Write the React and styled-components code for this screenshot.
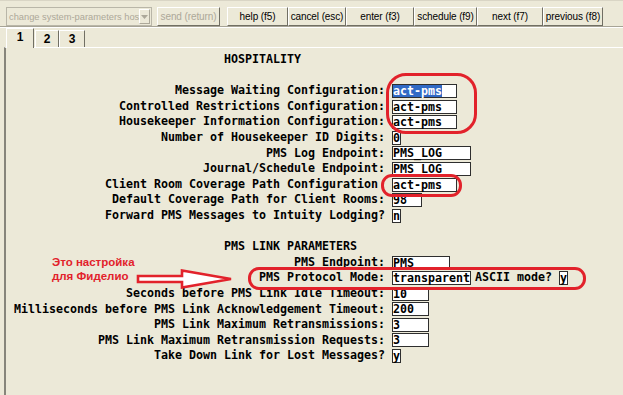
import React from 'react'
import styled, { createGlobalStyle } from 'styled-components'

const RED = '#e2222b'
const CELL = 7

const buttons = [
  { label: 'help (f5)', w: 61 },
  { label: 'cancel (esc)', w: 58 },
  { label: 'enter (f3)', w: 68 },
  { label: 'schedule (f9)', w: 63 },
  { label: 'next (f7)', w: 66 },
  { label: 'previous (f8)', w: 60 },
]

const rows = [
  { heading: 'HOSPITALITY' },
  {},
  { label: 'Message Waiting Configuration:', value: 'act-pms', size: 9, selected: true },
  { label: 'Controlled Restrictions Configuration:', value: 'act-pms', size: 9 },
  { label: 'Housekeeper Information Configuration:', value: 'act-pms', size: 9 },
  { label: 'Number of Housekeeper ID Digits:', value: '0', size: 1 },
  { label: 'PMS Log Endpoint:', value: 'PMS_LOG', size: 11 },
  { label: 'Journal/Schedule Endpoint:', value: 'PMS_LOG', size: 11 },
  { label: 'Client Room Coverage Path Configuration\u00a0', value: 'act-pms', size: 9 },
  { label: 'Default Coverage Path for Client Rooms:', value: '98', size: 4 },
  { label: 'Forward PMS Messages to Intuity Lodging?', value: 'n', size: 1 },
  {},
  { heading: 'PMS LINK PARAMETERS' },
  { label: 'PMS Endpoint:', value: 'PMS', size: 8 },
  { label: 'PMS Protocol Mode:', value: 'transparent', size: 11, extra: { label: 'ASCII mode?', value: 'y', size: 1 } },
  { label: 'Seconds before PMS Link Idle Timeout:', value: '10', size: 5 },
  { label: 'Milliseconds before PMS Link Acknowledgement Timeout:', value: '200', size: 5 },
  { label: 'PMS Link Maximum Retransmissions:', value: '3', size: 5 },
  { label: 'PMS Link Maximum Retransmission Requests:', value: '3', size: 5 },
  { label: 'Take Down Link for Lost Messages?', value: 'y', size: 1 },
]

export default function App() {
  return (
    <>
      <Global />
      <Root>
        <Toolbar>
          <Combo>
            <ComboText>change system-parameters hos</ComboText>
            <ComboArrow>
              <svg width="7" height="4" viewBox="0 0 7 4"><path d="M0 0h7L3.5 4z" fill="#aca899" /></svg>
            </ComboArrow>
          </Combo>
          <ToolButton $w={63} $disabled>send (return)</ToolButton>
          <ButtonGroup>
            {buttons.map(b => <ToolButton key={b.label} $w={b.w}>{b.label}</ToolButton>)}
          </ButtonGroup>
        </Toolbar>
        <Tabs>
          <Tab $active $w={28}>1</Tab>
          <Tab $w={24}>2</Tab>
          <Tab $w={26}>3</Tab>
        </Tabs>
        <Panel>
          {rows.map((r, i) => (
            <Row key={i}>
              {r.heading && <Heading>{r.heading}</Heading>}
              {r.label && <Label>{r.label}</Label>}
              {r.value && (
                <Field $size={r.size}>
                  {r.selected ? <Selected>{r.value}</Selected> : r.value}
                </Field>
              )}
              {r.extra && (
                <>
                  <ExtraLabel>{r.extra.label}</ExtraLabel>
                  <Field $size={r.extra.size}>{r.extra.value}</Field>
                </>
              )}
            </Row>
          ))}
        </Panel>

        <Oval $x={386} $y={73} $w={91} $h={61} $r={20} />
        <Oval $x={381} $y={174} $w={81} $h={23} $r={11} />
        <Oval $x={248} $y={267} $w={338} $h={23} $r={11} />
        <Note>Это настройка<br />для Фиделио</Note>
        <Arrow width="98" height="20" viewBox="0 0 98 20">
          <polygon points="2,7 46,7 46,1.5 95,10 46,18.5 46,13 2,13" fill="#fff" stroke={RED} strokeWidth="2.6" strokeLinejoin="miter" />
        </Arrow>
      </Root>
    </>
  )
}

const Global = createGlobalStyle`
  html, body {
    margin: 0;
    padding: 0;
    background: #ece9d8;
  }
`
const Root = styled.div`
  position: relative;
  width: 623px;
  height: 395px;
  overflow: hidden;
  background: #ece9d8;
  display: flex;
  flex-direction: column;
`
const Toolbar = styled.div`
  box-sizing: border-box;
  height: 28px;
  padding: 6px 0 0 6px;
  display: flex;
  align-items: flex-start;
  border-top: 1px solid #d9d5c5;
  border-bottom: 1px solid #fff;
  box-shadow: inset 0 -1px #a7a496;
`
const Combo = styled.div`
  box-sizing: border-box;
  width: 146px;
  height: 19px;
  display: flex;
  align-items: center;
  border: 1px solid #b9b6a8;
  background: #ece9d8;
`
const ComboText = styled.div`
  flex: 1;
  overflow: hidden;
  white-space: nowrap;
  padding-left: 2px;
  font: 9.3px 'Liberation Sans', Arial, sans-serif;
  color: #aca899;
`
const ComboArrow = styled.div`
  box-sizing: border-box;
  width: 11px;
  height: 15px;
  margin-right: 1px;
  display: flex;
  align-items: center;
  justify-content: center;
  border: 1px solid;
  border-color: #fff #aca899 #aca899 #fff;
`
const ButtonGroup = styled.div`
  display: flex;
  margin-left: 7px;
`
const ToolButton = styled.div`
  box-sizing: border-box;
  width: ${p => p.$w}px;
  height: 19px;
  margin-left: ${p => (p.$disabled ? 5 : 0)}px;
  display: flex;
  align-items: center;
  justify-content: center;
  border: 1px solid;
  border-color: #fff #716f64 #716f64 #fff;
  font: 10px 'Liberation Sans', Arial, sans-serif;
  letter-spacing: -0.1px;
  color: ${p => (p.$disabled ? '#aca899' : '#000')};
  white-space: nowrap;
  overflow: hidden;
`
const Tabs = styled.div`
  height: 19px;
  padding-left: 6px;
  display: flex;
  align-items: flex-end;
  position: relative;
  z-index: 1;
`
const Tab = styled.div`
  box-sizing: border-box;
  width: ${p => p.$w}px;
  height: ${p => (p.$active ? 20 : 17)}px;
  margin-bottom: ${p => (p.$active ? -1 : 0)}px;
  margin-right: ${p => (p.$active ? 1 : 0)}px;
  padding-bottom: ${p => (p.$active ? 3 : 1)}px;
  display: flex;
  align-items: center;
  justify-content: center;
  background: #ece9d8;
  border-top: 1px solid #fff;
  border-left: 1px solid #fff;
  border-right: 1px solid #716f64;
  font: bold 12px 'Liberation Sans', Arial, sans-serif;
  color: #000;
`
const Panel = styled.div`
  flex: 1;
  margin-left: 4px;
  padding: 4px 0 0 8px;
  border-top: 1px solid #fff;
  border-left: 2px solid #87857b;
  font-family: 'DejaVu Sans Mono', monospace;
  font-weight: bold;
  font-size: 11.63px;
  color: #000;
`
const Row = styled.div`
  height: 15.6px;
  display: flex;
  align-items: center;
  white-space: pre;
  line-height: 15.6px;
`
const Heading = styled.div`
  padding-left: ${30 * CELL}px;
`
const Label = styled.div`
  flex: none;
  width: ${53 * CELL}px;
  margin-right: ${CELL}px;
  text-align: right;
`
const Field = styled.div`
  flex: none;
  width: ${p => p.$size * CELL}px;
  height: 12px;
  line-height: 12px;
  border: 1px solid #2e2e2e;
  background: #fff;
`
const Selected = styled.span`
  display: inline-block;
  height: 12px;
  background: #316ac5;
  color: #fff;
`
const ExtraLabel = styled.div`
  margin: 0 ${CELL}px 0 4px;
`
const Oval = styled.div`
  position: absolute;
  left: ${p => p.$x}px;
  top: ${p => p.$y}px;
  width: ${p => p.$w}px;
  height: ${p => p.$h}px;
  box-sizing: border-box;
  border: 3px solid ${RED};
  border-radius: ${p => p.$r}px;
`
const Note = styled.div`
  position: absolute;
  left: 52px;
  top: 255px;
  font: bold 11.5px/14px 'Liberation Sans', Arial, sans-serif;
  color: ${RED};
`
const Arrow = styled.svg`
  position: absolute;
  left: 136px;
  top: 269px;
`
